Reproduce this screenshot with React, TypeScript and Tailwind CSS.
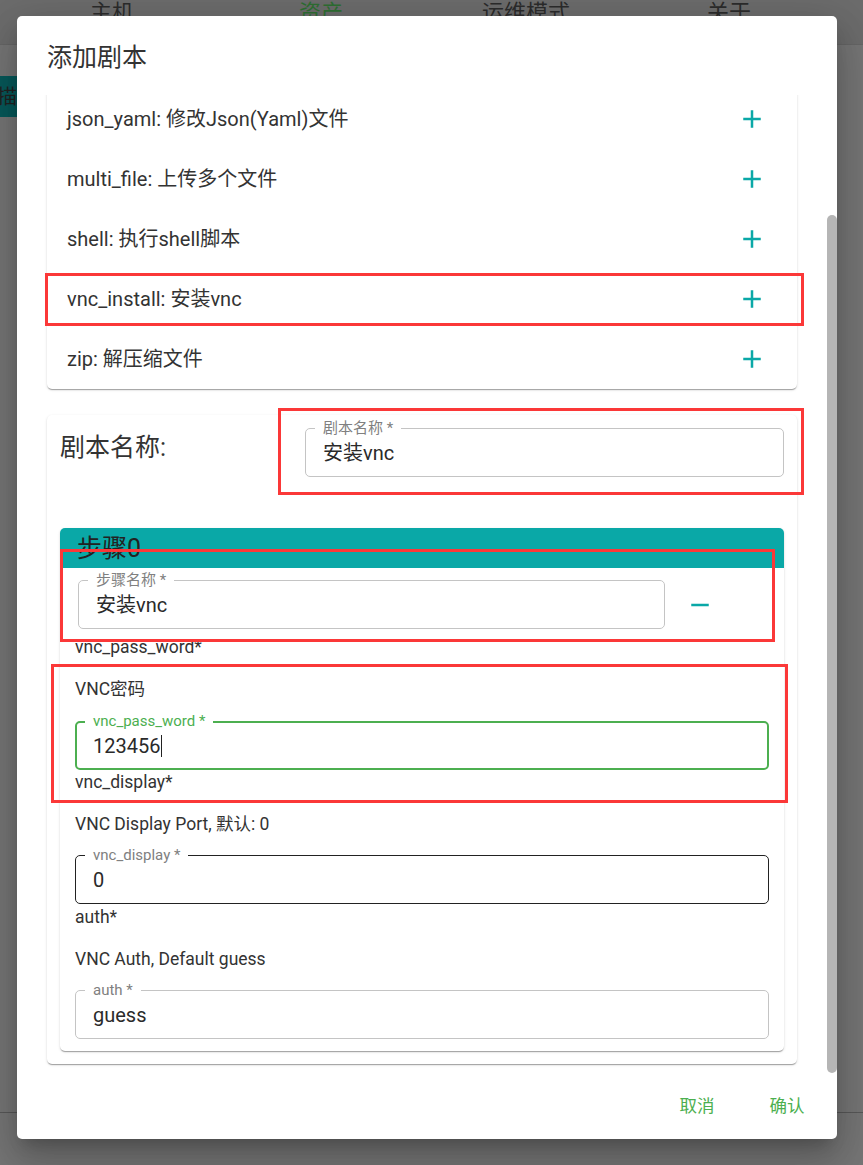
import React from 'react'

type FieldState = 'idle' | 'hover' | 'focus'

function AddIcon() {
    return (
        <svg width="30" height="30" viewBox="0 0 24 24" className="fill-[#0aa8a7]">
            <path d="M19 13h-6v6h-2v-6H5v-2h6V5h2v6h6v2z" />
        </svg>
    )
}

function RemoveIcon() {
    return (
        <svg width="30" height="30" viewBox="0 0 24 24" className="fill-[#0aa8a7]">
            <path d="M19 13H5v-2h14v2z" />
        </svg>
    )
}

function Field({
    label,
    value,
    state = 'idle',
    cursor = false,
    className = '',
}: {
    label: string
    value: string
    state?: FieldState
    cursor?: boolean
    className?: string
}) {
    const box =
        state === 'focus'
            ? 'border-2 border-[#4caf50]'
            : state === 'hover'
              ? 'border border-[#222]'
              : 'border border-[#c4c4c4]'
    const labelCls =
        state === 'focus' ? 'left-[8px] top-[-10px] text-[#4caf50]' : 'left-[9px] top-[-9px] text-[#808080]'
    return (
        <div className={`relative h-[49px] rounded-[5px] ${box} ${className}`}>
            <span className={`absolute bg-white px-[8px] text-[15px] leading-[16px] ${labelCls}`}>{label}</span>
            <div
                className={`flex h-full items-center text-[20px] text-[#2a2a2a] ${state === 'focus' ? 'pl-[16px]' : 'pl-[17px]'}`}
            >
                {value}
                {cursor && <span className="ml-[1px] inline-block h-[22px] w-[1px] bg-[#222]" />}
            </div>
        </div>
    )
}

const scripts = [
    'json_yaml: 修改Json(Yaml)文件',
    'multi_file: 上传多个文件',
    'shell: 执行shell脚本',
    'vnc_install: 安装vnc',
    'zip: 解压缩文件',
]

const params = [
    { name: 'vnc_pass_word*', desc: 'VNC密码', label: 'vnc_pass_word *', value: '123456', state: 'focus' as FieldState },
    { name: 'vnc_display*', desc: 'VNC Display Port, 默认: 0', label: 'vnc_display *', value: '0', state: 'hover' as FieldState },
    { name: 'auth*', desc: 'VNC Auth, Default guess', label: 'auth *', value: 'guess', state: 'idle' as FieldState },
]

const paper =
    'rounded-[5px] bg-white shadow-[0_2px_1px_-1px_rgba(0,0,0,0.2),0_1px_1px_0_rgba(0,0,0,0.14),0_1px_3px_0_rgba(0,0,0,0.12)]'

export default function App() {
    return (
        <div className="relative h-[1165px] w-[863px] overflow-hidden bg-[#767676] font-['Roboto','Noto_Sans_CJK_SC',sans-serif] text-[#333]">
            {/* page behind the backdrop */}
            <div className="flex h-[45px] items-start border-b border-[#666] bg-[#6c6c6c] text-[22px] leading-[24px] text-[#2c2c2c]">
                <span className="ml-[90px] mt-[1px]">主机</span>
                <span className="ml-[165px] mt-[1px] text-[#2f6f33]">资产</span>
                <span className="ml-[139px] mt-[1px]">运维模式</span>
                <span className="ml-[137px] mt-[1px]">关于</span>
            </div>
            <div className="mt-[31px] flex h-[41px] w-[17px] items-center justify-end overflow-hidden bg-[#07595a] text-[20px] whitespace-nowrap text-[#222]">
                扫描
            </div>
            <div className="mt-[995px] border-t border-[#585858]" />

            {/* dialog */}
            <div className="absolute left-[17px] top-[16px] flex h-[1123px] w-[820px] flex-col rounded-[5px] bg-white shadow-[0_11px_15px_-7px_rgba(0,0,0,0.2),0_24px_38px_3px_rgba(0,0,0,0.14),0_9px_46px_8px_rgba(0,0,0,0.12)]">
                <div className="px-[30px] pt-[22px] pb-[17px] text-[25px] leading-[40px]">添加剧本</div>

                <div className="flex min-h-0 flex-1">
                    <div className="min-w-0 flex-1 overflow-hidden px-[30px]">
                        <div className={`-mt-[6px] ${paper}`}>
                            {scripts.map((s) => (
                                <div key={s} className="flex h-[60px] items-center justify-between pl-[20px] pr-[30px]">
                                    <span className="text-[20px]">{s}</span>
                                    <AddIcon />
                                </div>
                            ))}
                        </div>

                        <div className={`mt-[26px] p-[13px] ${paper}`}>
                            <div className="flex items-center">
                                <div className="w-[245px] -mt-[9px] text-[25px]">剧本名称:</div>
                                <Field label="剧本名称 *" value="安装vnc" className="flex-1" />
                            </div>

                            <div className={`mt-[51px] overflow-hidden ${paper}`}>
                                <div className="h-[40px] bg-[#0aa8a7] pl-[17px] pt-[5px] text-[25px] leading-[32px] text-[#222]">
                                    步骤0
                                </div>
                                <div className="px-[15px] pt-[12px] pb-[12px]">
                                    <div className="ml-[3px] flex items-center">
                                        <Field label="步骤名称 *" value="安装vnc" className="w-[587px]" />
                                        <span className="ml-[20px]">
                                            <RemoveIcon />
                                        </span>
                                    </div>
                                    {params.map((p, i) => (
                                        <div key={p.name}>
                                            <div
                                                className={`text-[17.5px] leading-[24px] ${
                                                    i === 0 ? 'mt-[6px]' : i === 1 ? 'mt-0' : 'mt-[1px]'
                                                }`}
                                            >
                                                {p.name}
                                            </div>
                                            <div className="mt-[18px] text-[17.5px] leading-[24px]">{p.desc}</div>
                                            <Field
                                                label={p.label}
                                                value={p.value}
                                                state={p.state}
                                                cursor={p.state === 'focus'}
                                                className={i === 0 ? 'mt-[20px]' : 'mt-[19px]'}
                                            />
                                        </div>
                                    ))}
                                </div>
                            </div>
                        </div>
                    </div>
                    <div className="w-[10px] pt-[120px] pb-[1px]">
                        <div className="h-full rounded-[5px] bg-[#b5b5b5]" />
                    </div>
                </div>

                <div className="flex h-[65px] items-center justify-end gap-[10px] p-[10px]">
                    <button className="h-[45px] w-[80px] text-[17.5px] text-[#4caf50]">取消</button>
                    <button className="h-[45px] w-[80px] text-[17.5px] text-[#4caf50]">确认</button>
                </div>
            </div>

            {/* annotation boxes */}
            <div className="absolute left-[45px] top-[273px] h-[53px] w-[759px] border-[3px] border-[#fb3838]" />
            <div className="absolute left-[278px] top-[408px] h-[87px] w-[526px] border-[3px] border-[#fb3838]" />
            <div className="absolute left-[60px] top-[549px] h-[93px] w-[715px] border-[3px] border-[#fb3838]" />
            <div className="absolute left-[51px] top-[664px] h-[139px] w-[737px] border-[3px] border-[#fb3838]" />
        </div>
    )
}
